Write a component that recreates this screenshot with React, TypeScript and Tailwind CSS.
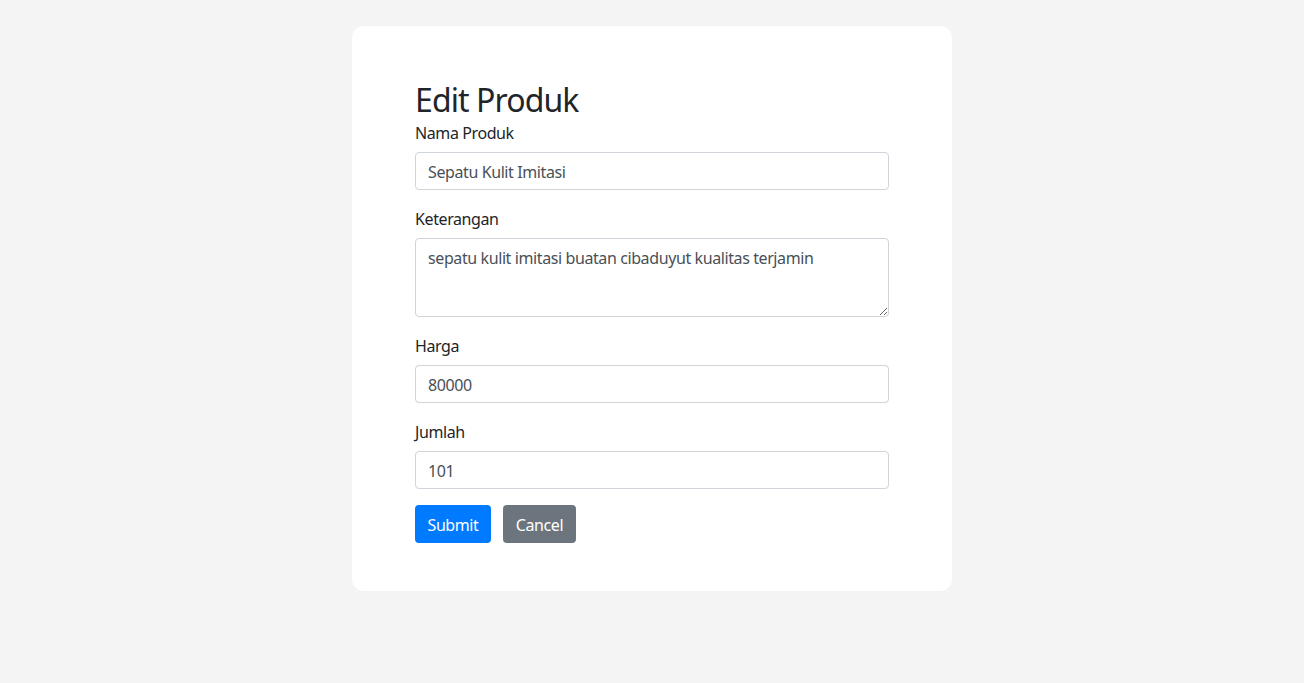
export default function App() {
  const inputCls =
    "block w-full h-[38px] px-3 pt-[7px] pb-[5px] text-base tracking-[-0.4px] text-[#495057] bg-white border border-[#ced4da] rounded outline-none"
  const labelCls = "block pt-px mb-[7px] text-base leading-6 tracking-[-0.4px]"

  return (
    <div className="min-h-screen bg-[#f4f4f4] pt-[26px] font-['Noto_Sans',sans-serif] text-[#212529]">
      <div className="mx-auto w-[600px] bg-white rounded-xl py-12 px-[63px]">
        <h2 className="text-[32px] leading-[1.2] tracking-[-0.9px] font-normal mt-[7px] mb-px">Edit Produk</h2>
        <form onSubmit={(e) => e.preventDefault()}>
          <div className="mb-4">
            <label className={labelCls}>Nama Produk</label>
            <input className={inputCls} defaultValue="Sepatu Kulit Imitasi" />
          </div>
          <div className="mb-4">
            <label className={labelCls}>Keterangan</label>
            <textarea
              className="block w-full h-[79px] px-3 pt-[7px] pb-[5px] text-base leading-6 tracking-[-0.4px] text-[#495057] bg-white border border-[#ced4da] rounded outline-none"
              defaultValue="sepatu kulit imitasi buatan cibaduyut kualitas terjamin"
            />
          </div>
          <div className="mb-4">
            <label className={labelCls}>Harga</label>
            <input className={inputCls} defaultValue="80000" />
          </div>
          <div className="mb-4">
            <label className={labelCls}>Jumlah</label>
            <input className={inputCls} defaultValue="101" />
          </div>
          <div className="flex gap-3">
            <button
              type="submit"
              className="h-[38px] w-[76px] pt-0.5 rounded bg-[#007bff] text-white text-base tracking-[-0.4px]"
            >
              Submit
            </button>
            <button
              type="button"
              className="h-[38px] w-[73px] pt-0.5 rounded bg-[#6c757d] text-white text-base tracking-[-0.4px]"
            >
              Cancel
            </button>
          </div>
        </form>
      </div>
    </div>
  )
}
